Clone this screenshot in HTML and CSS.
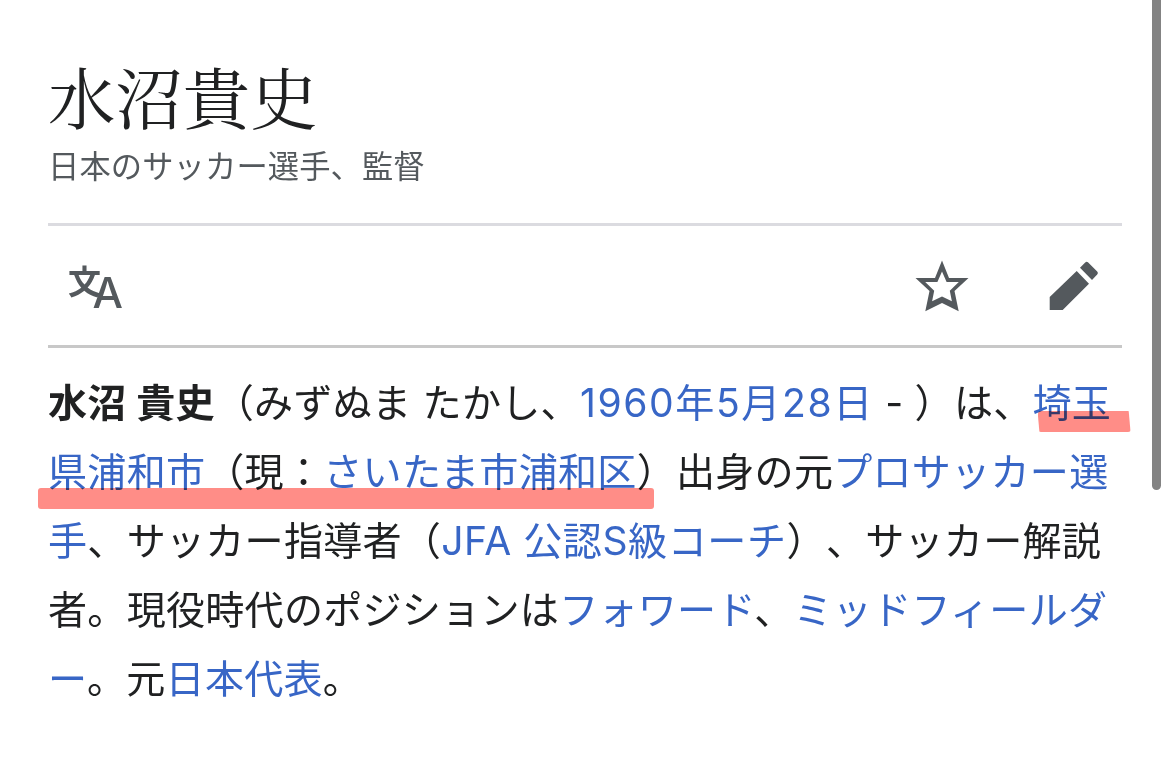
FILE: index.html
```html
<!DOCTYPE html>
<html lang="ja">
<head>
    <meta charset="UTF-8">
    <meta name="viewport" content="width=device-width, initial-scale=1.0">
    <title>水沼貴史</title>
    <link rel="stylesheet" href="styles.css">
</head>
<body>
    <div class="page">
        <header>
            <h1>水沼貴史</h1>
            <p class="description">日本のサッカー選手、監督</p>
        </header>

        <nav class="actions">
            <svg class="icon language" viewBox="0 0 60 56">
                <text class="icon-kanji" x="2" y="36">文</text>
                <text class="icon-latin" x="26.5" y="49.5">A</text>
            </svg>
            <svg class="icon star" viewBox="0 0 56 56">
                <path fill-rule="evenodd" d="M28 2.5l7 17.6h19.5L40.5 33 44.7 53.2 28 45 11.3 53.2l4.2-20.2L1.5 20.1H21zM28 13.5L23.4 24H11.2l9 8.7-2.1 10.6L28 38.6l9.9 4.7-2.1-10.6 9-8.7H32.6z"/>
            </svg>
            <svg class="icon edit" viewBox="0 0 56 56">
                <path d="M3.7 39L30.7 13 43 25.7 16.7 52h-13zM34 9.7l5.2-5.2q1.5-1.5 3 0l9 9q1.5 1.5 0 3L46 22z"/>
            </svg>
        </nav>

        <p class="intro">
            <span class="line"><b>水沼 貴史</b>（みずぬま たかし、<a class="date">1960年5月28日</a> - ）は、<a class="marked">埼玉</a></span>
            <span class="line marked"><a>県浦和市</a>（現：<a>さいたま市浦和区</a>）出身の元<a>プロサッカー選</a></span>
            <span class="line"><a>手</a>、サッカー指導者（<a class="licence">JFA 公認S級コーチ</a>）、サッカー解説</span>
            <span class="line">者。現役時代のポジションは<a>フォワード</a>、<a>ミッドフィールダ</a></span>
            <span class="line"><a>ー</a>。元<a>日本代表</a>。</span>
        </p>
    </div>
    <div class="scrollbar"></div>
</body>
</html>
```

FILE: styles.css
```css
body {
    font-family: Inter, "Noto Sans CJK JP", sans-serif;
    background-color: #fff;
    color: #202122;
    margin: 0;
    height: 765px;
    overflow: hidden;
}

.page {
    padding: 48px 48px 0;
}

h1 {
    margin: 0;
    font-family: "Noto Serif CJK JP", "Liberation Serif", serif;
    font-size: 67.4px;
    font-weight: 400;
    line-height: 94px;
}

.description {
    margin: 0;
    height: 79px;
    padding-top: 2px;
    color: #54595d;
    font-family: "Noto Sans CJK JP", sans-serif;
    font-size: 31.3px;
    line-height: 42px;
    letter-spacing: 0.1px;
}

.actions {
    display: flex;
    box-sizing: border-box;
    height: 125px;
    padding: 32px 20px 0 18px;
    border-top: 3px solid #dbdbe0;
    border-bottom: 3px solid #c8c8c8;
}

.icon {
    width: 56px;
    height: 56px;
    fill: #54595d;
    overflow: visible;
}

.language {
    width: 60px;
    margin-right: auto;
}

.icon-kanji {
    font: 700 33px "Noto Sans CJK JP", sans-serif;
}

.icon-latin {
    font: 550 43px Inter, sans-serif;
}

.edit {
    margin-left: 76px;
}

.intro {
    margin: 20px 0 0;
    font-size: 39.1px;
    line-height: 69px;
    letter-spacing: 0.24px;
    text-spacing-trim: space-all;
}

.line {
    display: block;
    height: 69px;
    white-space: nowrap;
}

.intro a {
    color: #3866c6;
}

.intro .date {
    letter-spacing: 1.6px;
}

.intro .licence {
    letter-spacing: 0.55px;
}

/* highlighter strokes */
.marked {
    position: relative;
}

.marked::after {
    content: "";
    position: absolute;
    top: 32px;
    left: 5px;
    width: 93px;
    height: 21px;
    background: #ff8d87;
    border-radius: 3px;
    mix-blend-mode: multiply;
    filter: blur(0.6px);
    clip-path: polygon(0 0, 98% 0, 100% 100%, 2% 100%);
}

.line.marked::after {
    top: 51px;
    left: -10px;
    width: 616px;
    clip-path: none;
}

.scrollbar {
    position: absolute;
    top: 0;
    left: 1152px;
    width: 9px;
    height: 490px;
    border-radius: 0 0 5px 5px;
    background: #838383;
}
```
